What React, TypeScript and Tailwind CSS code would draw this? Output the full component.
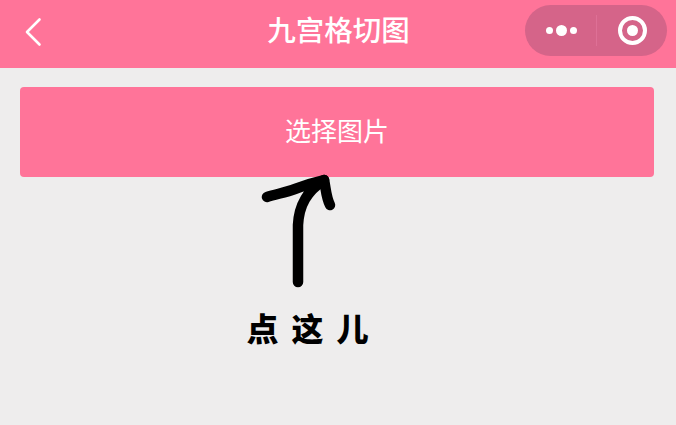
import React from 'react';

const FONT = '"Noto Sans CJK SC", "Noto Sans", sans-serif';

const App = () => {
  return (
    <div className="flex h-screen flex-col overflow-hidden bg-[#eeeded]" style={{ fontFamily: FONT }}>
      {/* Nav bar */}
      <header className="grid h-[68px] shrink-0 grid-cols-[1fr_auto_1fr] items-center bg-[#ff7499] pb-[9px] px-[9px] text-white">
        <svg width="20" height="30" viewBox="0 0 20 30" fill="none" className="ml-[14px] mt-[5px]">
          <path d="M16.5 2.5 L4 15 L16.5 27.5" stroke="white" strokeWidth="2.6" strokeLinecap="round" strokeLinejoin="round" />
        </svg>
        <h1 className="ml-[1px] text-[28.5px] font-medium leading-none">九宫格切图</h1>
        <div className="mt-[1px] flex h-[51px] w-[142px] items-center justify-self-end rounded-full bg-[#d56489]">
          <div className="flex w-[71px] items-center justify-center gap-[3px] pl-[2px]">
            <span className="h-[7px] w-[7px] rounded-full bg-white" />
            <span className="h-[11px] w-[11px] rounded-full bg-white" />
            <span className="h-[7px] w-[7px] rounded-full bg-white" />
          </div>
          <div className="h-[31px] w-px bg-[#de7096]" />
          <div className="flex flex-1 items-center justify-center">
            <div className="flex h-[29px] w-[29px] items-center justify-center rounded-full border-[4px] border-white">
              <span className="h-[11px] w-[11px] rounded-full bg-white" />
            </div>
          </div>
        </div>
      </header>

      {/* Main */}
      <main className="flex flex-col items-center pl-[20px] pr-[22px] pt-[19px]">
        <button className="h-[90px] w-full rounded-[4px] bg-[#ff7499] pb-[5px] text-[26px] text-white">选择图片</button>
        <svg width="90" height="116" viewBox="0 0 90 116" fill="none" className="relative z-10 mt-[-4px] ml-[-62px]">
          <path
            d="M6 24 C 16 21, 26 19, 34 16 C 44 12, 54 9, 63 7 C 46 18, 38 32, 37 52 L 37 109"
            stroke="black"
            strokeWidth="10.5"
            strokeLinecap="round"
            strokeLinejoin="round"
          />
          <path d="M63 7 C 65 16, 65 24, 69 32" stroke="black" strokeWidth="10.5" strokeLinecap="round" strokeLinejoin="round" />
        </svg>
        <p className="ml-[-46px] mt-[22px] text-[32px] font-black leading-none tracking-[13px] text-black">点这儿</p>
      </main>
    </div>
  );
};

export default App;
